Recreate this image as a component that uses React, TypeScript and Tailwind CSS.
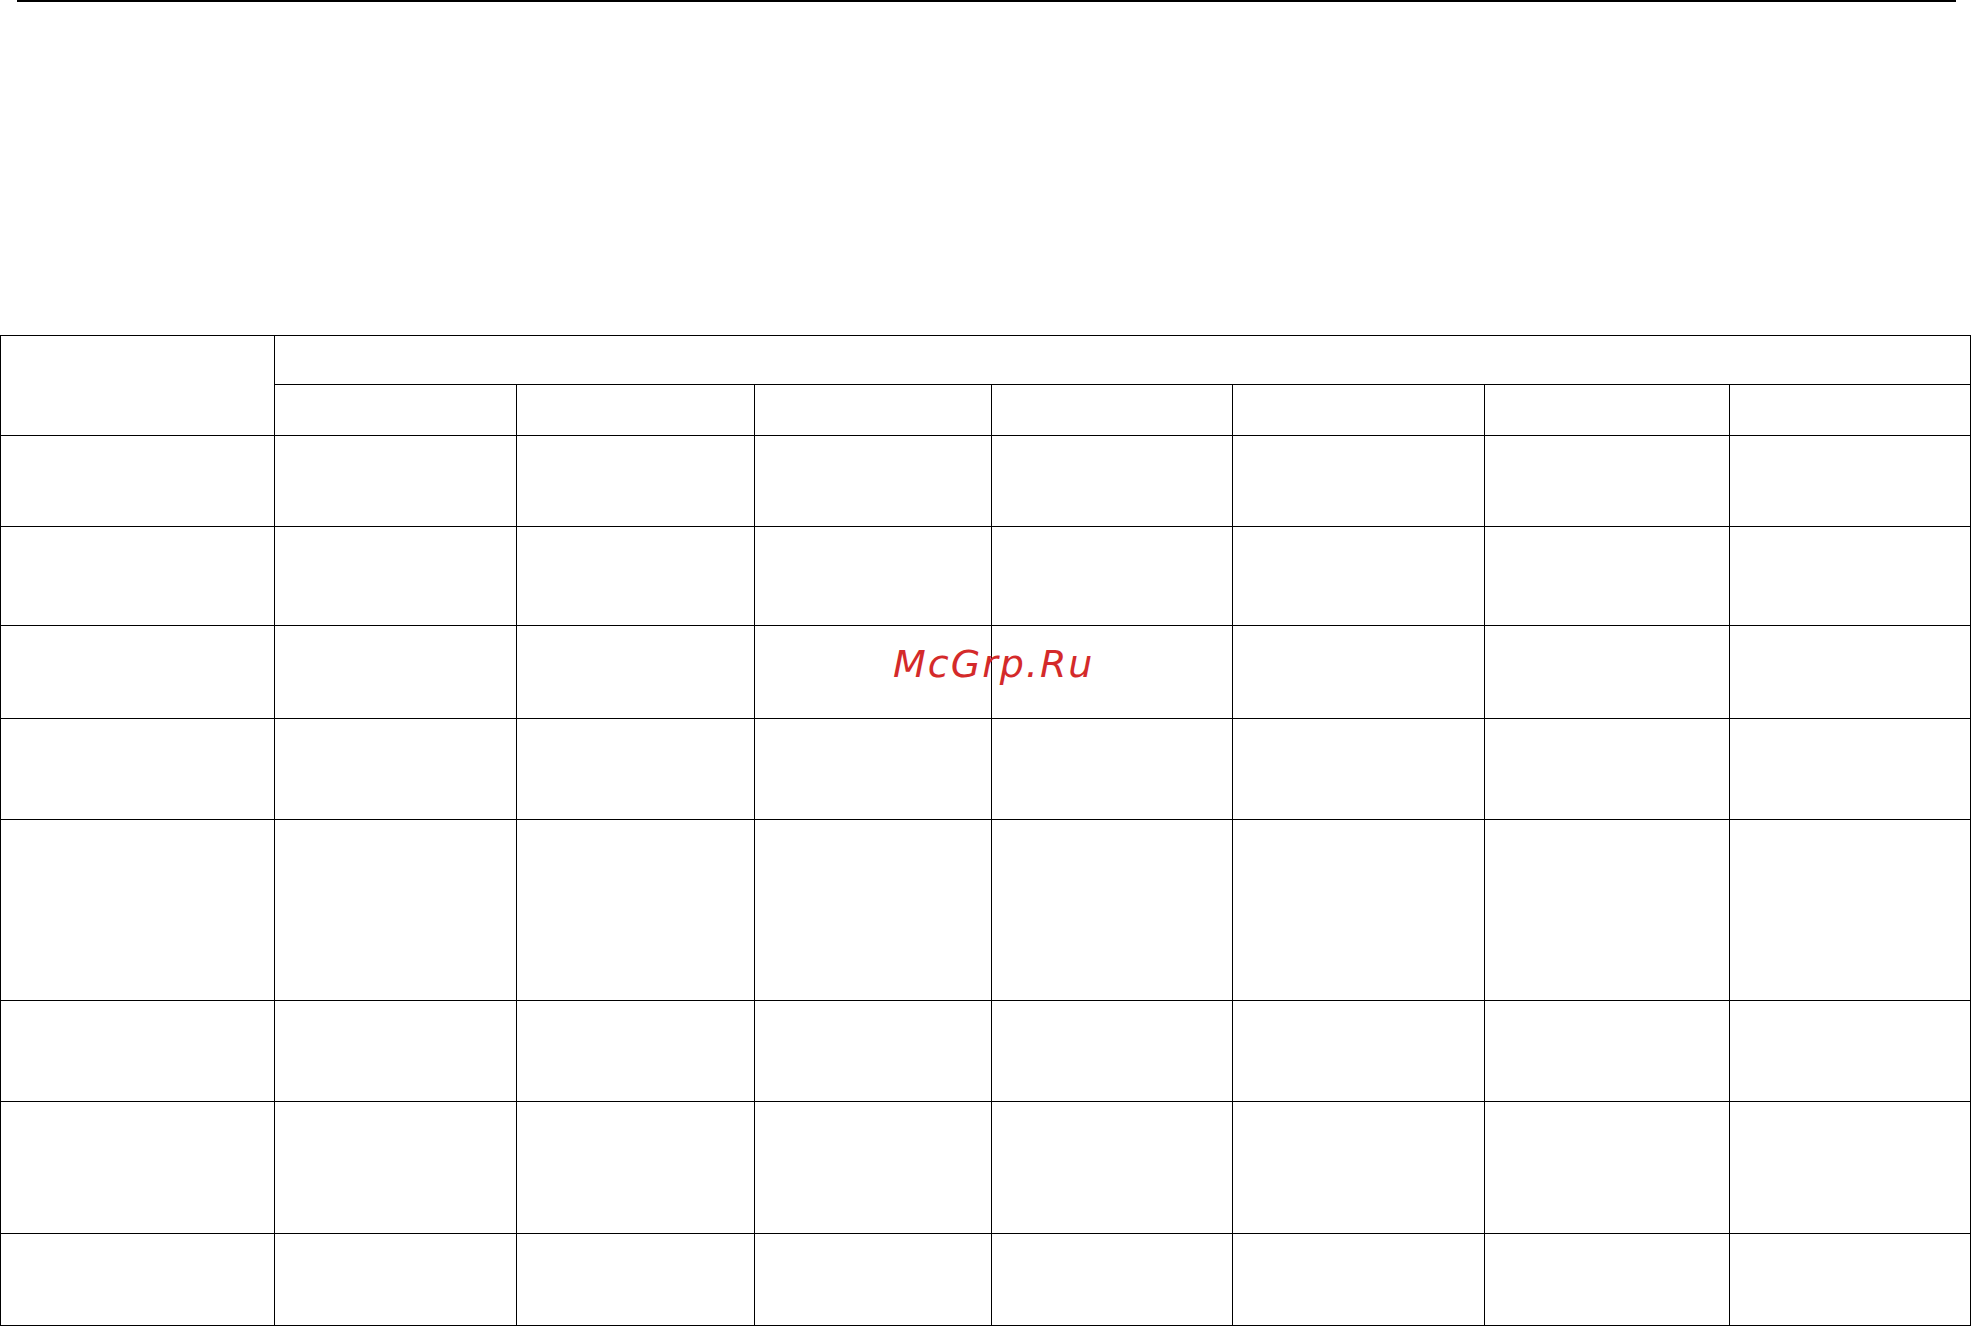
import React from "react";

// Empty form table: header spans, then 8 body rows
const bodyRows = 8;
const cols = 8;

export default function App() {
  return (
    <div className="relative h-[1326px] w-[1972px] overflow-hidden bg-white">
      {/* top rule */}
      <div className="ml-[17px] h-[2px] w-[1939px] bg-black" />

      {/* table */}
      <div
        className="mt-[333px] grid w-[1971px] gap-px bg-black p-px"
        style={{
          gridTemplateColumns: "273px 241px 237px 236px 240px 251px 244px 240px",
          gridTemplateRows: "48px 50px 90px 98px 92px 100px 180px 100px 131px 91px",
        }}
      >
        <div className="row-span-2 bg-white" />
        <div className="col-span-7 bg-white" />
        {Array.from({ length: cols - 1 }).map((_, i) => (
          <div key={`h${i}`} className="bg-white" />
        ))}
        {Array.from({ length: bodyRows * cols }).map((_, i) => (
          <div key={`c${i}`} className="bg-white" />
        ))}
      </div>

      {/* watermark */}
      <span
        className="absolute left-[893px] top-[645px] text-[38px] leading-none italic tracking-[2px] text-[#d42a2a]"
        style={{ fontFamily: '"DejaVu Sans", sans-serif' }}
      >
        McGrp.Ru
      </span>
    </div>
  );
}
